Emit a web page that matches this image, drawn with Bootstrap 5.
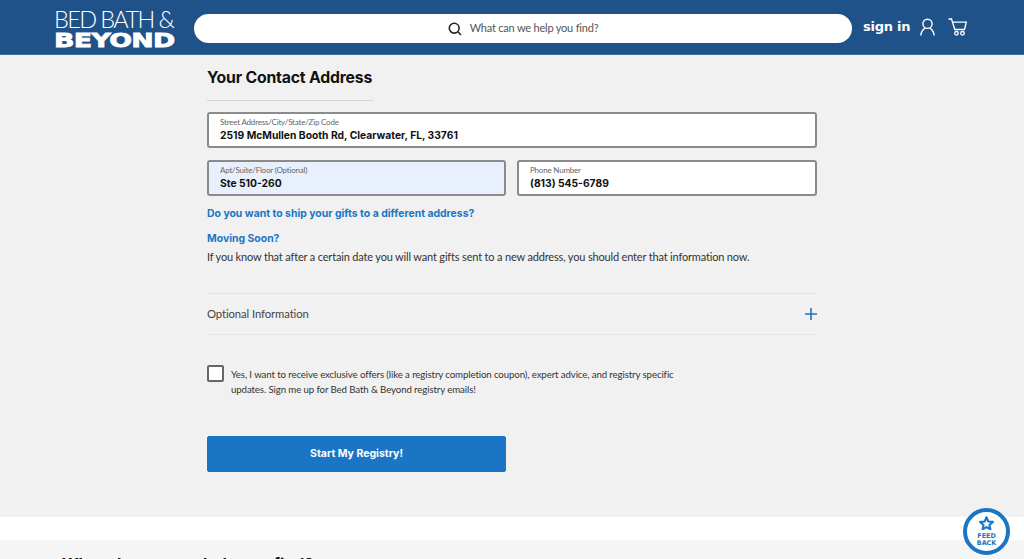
<!DOCTYPE html>
<html lang="en">
<head>
  <meta charset="UTF-8" />
  <title>Start My Registry</title>
  <link rel="stylesheet" href="https://cdn.jsdelivr.net/npm/bootstrap@5.3.3/dist/css/bootstrap.min.css" />
  <style>
    html, body { height: 559px; overflow: hidden; }
    body { background: #f1f1f1; font-family: "Lato", "Liberation Sans", sans-serif; color: #333; }
    .site-top { height: 55px; background: #1f5289; border-bottom: 1px solid #3f6d9f; padding-left: 54px; padding-right: 57px; }
    .logo-box { width: 123px; line-height: 1; color: #fff; flex-shrink: 0; padding-top: 3px; }
    .logo-a { font-family: "Lato", sans-serif; font-weight: 300; font-size: 23.5px; letter-spacing: -1.6px; height: 20px; line-height: 20px; white-space: nowrap; }
    .logo-b { font-family: "DejaVu Sans", sans-serif; font-weight: 700; font-size: 20px; letter-spacing: -.5px; height: 16px; line-height: 16px; margin-top: 3px; transform: scaleX(1.34); transform-origin: left; white-space: nowrap; -webkit-text-stroke: .8px #fff; }
    .search-pill { width: 658px; height: 29px; margin-left: 17px; margin-top: 3px; background: #fff; border-radius: 15px; font-size: 11px; letter-spacing: -.2px; color: #555; flex-shrink: 0; }
    .sign-txt { font-family: "DejaVu Sans", sans-serif; font-weight: 700; font-size: 13px; letter-spacing: -.25px; color: #fff; margin-left: 11px; white-space: nowrap; }
    .user-ico { margin-left: 10px; flex-shrink: 0; }
    .cart-ico { margin-left: 13px; flex-shrink: 0; }
    .form-col { width: 610px; margin-left: 207px; }
    .form-title { font-family: "Inter", sans-serif; font-weight: 700; font-size: 15.8px; color: #111; letter-spacing: -.2px; line-height: 20px; padding-top: 13px; margin: 0; width: 166px; white-space: nowrap; border-bottom: 1px solid #d4d4d4; height: 46px; }
    .addr-box { height: 36px; border: 2px solid #8b8b8b; border-radius: 3px; background: #fff; padding: 3px 11px 0; }
    .addr-box.filled { background: #e8f0fe; width: 299px; }
    .addr-first { margin-top: 11px; }
    .addr-pair { gap: 11px; margin-top: 12px; margin-bottom: 10px; }
    .addr-lbl { font-size: 8px; letter-spacing: -.2px; line-height: 11px; color: #666; display: block; }
    .addr-val { font-family: "Inter", sans-serif; font-size: 10.3px; font-weight: 700; line-height: 15px; color: #111; white-space: nowrap; }
    .blue-link { font-family: "Inter", sans-serif; font-size: 10.43px; font-weight: 700; color: #1b75c5; text-decoration: none; line-height: 16px; display: block; margin-bottom: 9px; }
    .plain-note { font-size: 11px; letter-spacing: -.17px; line-height: 16px; color: #333; margin: -7px 0 0; white-space: nowrap; }
    .opt-row { height: 42px; border-top: 1px solid #e4e4e4; border-bottom: 1px solid #e4e4e4; margin-top: 28px; font-size: 11.3px; letter-spacing: -.1px; color: #444; }
    .offer-row { margin-top: 30px; }
    .tick-box { width: 17px; height: 17px; border: 2px solid #666; border-radius: 2px; background: #fff; flex-shrink: 0; }
    .offer-txt { font-size: 9.7px; letter-spacing: -.12px; line-height: 15px; color: #333; width: 450px; margin: 2px 0 0 7px; }
    .go-btn { width: 299px; height: 36px; margin-top: 39px; background: #1b75c5; border-color: #1b75c5; color: #fff; font-family: "Inter", sans-serif; font-weight: 700; font-size: 10.5px; border-radius: 2px; }
    .band-white { height: 23px; background: #fff; margin-top: 45px; }
    .band-grey { height: 30px; background: #f5f5f5; padding: 12px 0 0 62px; font-family: "Inter", sans-serif; font-weight: 700; font-size: 16px; line-height: 24px; color: #111; white-space: nowrap; overflow: hidden; }
    .feed-badge { position: absolute; left: 963px; top: 508px; width: 47px; height: 47px; border-radius: 50%; border: 4px solid #1b75c5; background: #fff; color: #1b75c5; font-family: "DejaVu Sans", sans-serif; font-weight: 700; font-size: 6.4px; line-height: 6.5px; text-align: center; padding-top: 4px; }
    .feed-star { margin-bottom: 3px; }
  </style>
</head>
<body>
  <header class="site-top d-flex align-items-center">
    <div class="logo-box">
      <div class="logo-a">BED BATH &amp;</div>
      <div class="logo-b">BEYOND</div>
    </div>
    <div class="search-pill d-flex align-items-center justify-content-center gap-2">
      <svg width="14" height="14" viewBox="0 0 14 14" fill="none" stroke="#222" stroke-width="1.6"><circle cx="6.2" cy="6.2" r="4.9"/><path d="M9.8 9.8 13 13"/></svg>
      <span>What can we help you find?</span>
    </div>
    <span class="sign-txt">sign in</span>
    <svg class="user-ico" width="15" height="18" viewBox="0 0 15 18" fill="none" stroke="#fff" stroke-width="1.4"><circle cx="7.5" cy="5.8" r="4.6"/><path d="M.8 17.500c.4-3.600 2.300-6.200 4.200-7.400M14.200 17.500c-.4-3.600-2.300-6.200-4.200-7.400"/></svg>
    <svg class="cart-ico" width="19" height="18" viewBox="0 0 19 18" fill="none" stroke="#fff" stroke-width="1.3"><path d="M.5 1h3l3.300 10.500h9.700l1.800-7.300H4.500"/><circle cx="8.500" cy="15.300" r="1.800"/><circle cx="14.500" cy="15.300" r="1.800"/></svg>
  </header>

  <main class="form-col">
    <h1 class="form-title">Your Contact Address</h1>
    <div class="addr-box addr-first">
      <span class="addr-lbl">Street Address/City/State/Zip Code</span>
      <div class="addr-val">2519 McMullen Booth Rd, Clearwater, FL, 33761</div>
    </div>
    <div class="d-flex addr-pair">
      <div class="addr-box filled">
        <span class="addr-lbl">Apt/Suite/Floor (Optional)</span>
        <div class="addr-val">Ste 510-260</div>
      </div>
      <div class="addr-box flex-grow-1">
        <span class="addr-lbl">Phone Number</span>
        <div class="addr-val">(813) 545-6789</div>
      </div>
    </div>
    <a class="blue-link" href="#">Do you want to ship your gifts to a different address?</a>
    <a class="blue-link" href="#">Moving Soon?</a>
    <p class="plain-note">If you know that after a certain date you will want gifts sent to a new address, you should enter that information now.</p>
    <div class="opt-row d-flex align-items-center justify-content-between">
      <span>Optional Information</span>
      <svg width="12" height="12" viewBox="0 0 12 12" stroke="#1b75c5" stroke-width="1.6"><path d="M6 0v12M0 6h12"/></svg>
    </div>
    <div class="d-flex offer-row">
      <div class="tick-box"></div>
      <div class="offer-txt">Yes, I want to receive exclusive offers (like a registry completion coupon), expert advice, and registry specific updates. Sign me up for Bed Bath &amp; Beyond registry emails!</div>
    </div>
    <button class="btn go-btn d-block" type="button">Start My Registry!</button>
  </main>

  <div class="band-white"></div>
  <div class="band-grey">What else can we help you find?</div>

  <div class="feed-badge">
    <svg class="feed-star d-block mx-auto" width="15" height="14" viewBox="0 0 24 23" fill="none" stroke="#1b75c5" stroke-width="3.4" stroke-linejoin="round"><path d="M12 2l3 7 7.500.7-5.700 5 1.700 7.300L12 18.200 5.500 22l1.700-7.300-5.700-5L9 9z"/></svg>
    FEED<br>BACK
  </div>
  <script src="https://cdn.jsdelivr.net/npm/bootstrap@5.3.3/dist/js/bootstrap.bundle.min.js"></script>
</body>
</html>
